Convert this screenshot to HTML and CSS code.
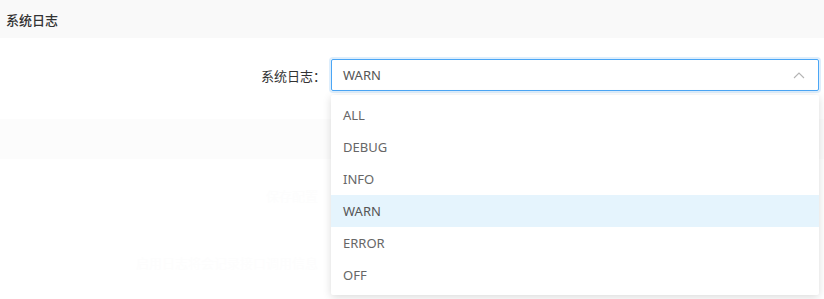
FILE: index.html
```html
<!DOCTYPE html>
<html lang="zh-CN">
<head>
    <meta charset="UTF-8">
    <meta name="viewport" content="width=device-width, initial-scale=1.0">
    <title>系统日志</title>
    <link rel="stylesheet" href="styles.css">
</head>
<body>
    <div class="header">系统日志</div>

    <div class="form">
        <div class="form-row">
            <label class="form-label">系统日志：</label>
            <div class="select">
                <div class="select-input">
                    <span class="select-value">WARN</span>
                    <svg class="select-arrow" width="12" height="8" viewBox="0 0 12 8">
                        <polyline points="1,7 6,2 11,7" fill="none" stroke="#b4b4b4" stroke-width="1.1"/>
                    </svg>
                </div>
                <ul class="dropdown">
                    <li>ALL</li>
                    <li>DEBUG</li>
                    <li>INFO</li>
                    <li class="selected">WARN</li>
                    <li>ERROR</li>
                    <li>OFF</li>
                </ul>
            </div>
        </div>

        <!-- faded content behind the open menu -->
        <div class="ghost-band"></div>
        <div class="ghost-row ghost-first">保存配置</div>
        <div class="ghost-row ghost-second">启用日志将会记录接口调用信息</div>
    </div>
</body>
</html>
```

FILE: styles.css
```css
html, body {
    min-height: 299px;
}
body {
    margin: 0;
    font-family: "Noto Sans", "Noto Sans CJK SC", sans-serif;
    font-size: 13px;
    color: #333;
    background: #fff;
}
.header {
    height: 38px;
    background-color: #f9f9f9;
    display: flex;
    align-items: center;
    padding-left: 6px;
    font-weight: 500;
    color: #333;
}
.form {
    padding-top: 21px;
    padding-bottom: 20px;
}
.form-row {
    display: flex;
    align-items: center;
}
.form-label {
    width: 331px;
    box-sizing: border-box;
    padding-right: 5px;
    text-align: right;
    color: #333;
}
.select {
    position: relative;
    width: 488px;
}
.select-input {
    height: 32px;
    box-sizing: border-box;
    border: 1px solid #4ba6f5;
    border-radius: 2px;
    box-shadow: 0 0 0 2px #deeefc;
    display: flex;
    align-items: center;
    justify-content: space-between;
    padding: 0 13px 0 11px;
    color: #555;
}
.dropdown {
    position: absolute;
    top: 36px;
    left: 0;
    right: 0;
    margin: 0;
    padding: 4px 0;
    list-style: none;
    background: #fff;
    border-radius: 2px;
    box-shadow: 0 2px 8px rgba(0, 0, 0, 0.15);
    z-index: 2;
}
.dropdown li {
    height: 32px;
    line-height: 32px;
    padding-left: 12px;
    color: #666;
}
.dropdown li.selected {
    background-color: #e5f4fd;
    color: #555;
}
.ghost-band {
    margin-top: 28px;
    height: 40px;
    background-color: #fcfcfc;
}
.ghost-row {
    width: 318px;
    text-align: right;
    color: #fdfdfd;
}
.ghost-first {
    margin-top: 27px;
}
.ghost-second {
    margin-top: 48px;
}
```
